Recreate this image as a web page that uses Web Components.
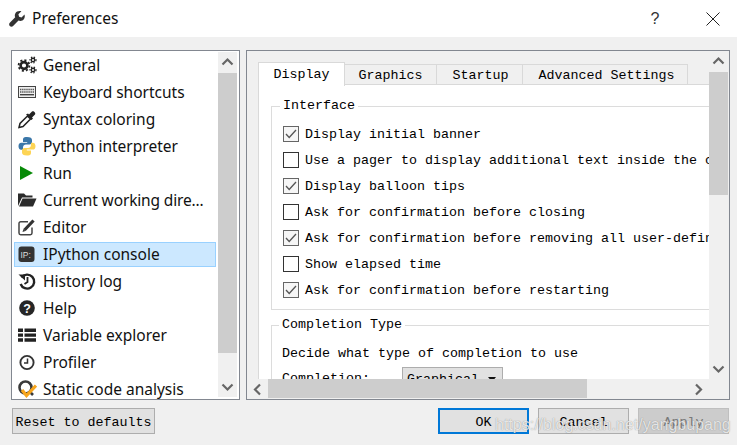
<!DOCTYPE html>
<html lang="en">
<head>
<meta charset="utf-8">
<title>Preferences</title>
<style>
    html, body { margin: 0; height: 100%; overflow: hidden; background: #f0f0f0; }
    svg { display: block; }
</style>
</head>
<body>
<pref-dialog>
    <title-bar slot="title">Preferences</title-bar>

    <nav-list slot="nav">
        <nav-item><svg slot="icon" width="20" height="20" viewBox="0 0 20 20" fill="none" stroke="#222"><circle cx="7" cy="10.5" r="3.4" stroke-width="2.6"/><circle cx="7" cy="10.5" r="5.4" stroke-width="1.8" stroke-dasharray="2.1 2.1"/><circle cx="16" cy="5" r="1.7" stroke-width="1.4"/><circle cx="16" cy="5" r="3" stroke-width="1.2" stroke-dasharray="1.4 1.5"/><circle cx="16" cy="15" r="1.7" stroke-width="1.4"/><circle cx="16" cy="15" r="3" stroke-width="1.2" stroke-dasharray="1.4 1.5"/></svg>General</nav-item>
        <nav-item><svg slot="icon" width="20" height="20" viewBox="0 0 20 20" fill="none"><rect x="1.5" y="4.5" width="17" height="11" fill="#eee" stroke="#444"/><path d="M3 7.5h14M3 10h14" stroke="#555" stroke-width="1.4" stroke-dasharray="1.4 .7"/><path d="M3 12.7h14" stroke="#444" stroke-width="1.4"/></svg>Keyboard shortcuts</nav-item>
        <nav-item><svg slot="icon" width="20" height="20" viewBox="0 0 20 20"><path d="M2 18.500l1-4 7.500-7.500 3 3L6 17.500z" fill="#fff" stroke="#222" stroke-width="1.500"/><path d="M9 5.500l5.500 5.500 1.500-1.500-1-1 3-3c1.200-1.500-1.500-4.200-3-3l-3 3-1-1z" fill="#222"/></svg>Syntax coloring</nav-item>
        <nav-item><svg slot="icon" width="20" height="20" viewBox="0 0 20 20"><path d="M10 1c-4 0-4 1.700-4 3v2h4.200v.8H4.200C2.400 6.800 1.500 8.300 1.500 10.200S2.400 13.700 4.200 13.700H6v-2.300c0-1.700 1.400-3 3-3h3.500c1.400 0 2.500-1.100 2.500-2.500V4c0-1.700-1.500-3-5-3z" fill="#3b77a9"/><path d="M10 19.400c4 0 4-1.700 4-3v-2H9.800v-.8h6c1.800 0 2.700-1.500 2.700-3.400S17.600 6.700 15.800 6.700H14V9c0 1.700-1.400 3-3 3H7.500C6.100 12 5 13.100 5 14.500v1.900c0 1.700 1.500 3 5 3z" fill="#fdd455"/></svg>Python interpreter</nav-item>
        <nav-item><svg slot="icon" width="20" height="20" viewBox="0 0 20 20"><path d="M3 3l13 7-13 7z" fill="#078a07"/></svg>Run</nav-item>
        <nav-item><svg slot="icon" width="20" height="20" viewBox="0 0 20 20"><path d="M1 3.500h6l2 2h6.500v2H5L2 14 1 16z" fill="#2b2b2b"/><path d="M5.500 8.500H19.500L16 16.500H2z" fill="#2b2b2b"/></svg><span style="letter-spacing:-.15px">Current working dire...</span></nav-item>
        <nav-item><svg slot="icon" width="20" height="20" viewBox="0 0 20 20" fill="none"><path d="M15 10.500v5.500a1.700 1.700 0 0 1-1.700 1.700H3.700A1.700 1.700 0 0 1 2 16V6.500a1.700 1.700 0 0 1 1.700-1.700H11" stroke="#444" stroke-width="1.500"/><path d="M7.500 13L16.500 3.500" stroke="#333" stroke-width="3.200"/><path d="M5.500 15l1-3 2 2z" fill="#333"/></svg>Editor</nav-item>
        <nav-item selected><svg slot="icon" width="20" height="20" viewBox="0 0 20 20"><rect x="1.500" y="2.500" width="16" height="15.500" rx="3" fill="#333"/><text x="3.500" y="13.500" font-family="Liberation Sans, sans-serif" font-size="8.500" fill="#ddd">IP:</text></svg>IPython console</nav-item>
        <nav-item><svg slot="icon" width="20" height="20" viewBox="0 0 20 20" fill="none" stroke="#222"><path d="M4.500 6.500A7 7 0 1 1 3.600 13" stroke-width="2.400"/><path d="M1.500 3.500h6.500v6z" fill="#222" stroke="none"/><path d="M10.500 6v5l-3 2" stroke-width="1.800"/></svg>History log</nav-item>
        <nav-item><svg slot="icon" width="20" height="20" viewBox="0 0 20 20"><circle cx="10" cy="10" r="7.800" fill="#262626"/><text x="10" y="14.500" text-anchor="middle" font-family="Liberation Sans, sans-serif" font-weight="700" font-size="12.500" fill="#fff">?</text></svg>Help</nav-item>
        <nav-item><svg slot="icon" width="20" height="20" viewBox="0 0 20 20" fill="#222"><path d="M1 3.500h5v3.400H1zM7.500 3.500H19v3.400H7.500zM1 8.400h5v3.400H1zM7.500 8.400H19v3.400H7.500zM1 13.300h5v3.400H1zM7.500 13.300H19v3.400H7.500z"/></svg>Variable explorer</nav-item>
        <nav-item><svg slot="icon" width="20" height="20" viewBox="0 0 20 20" fill="none" stroke="#333"><circle cx="10" cy="10.500" r="6.600" stroke-width="1.900"/><path d="M10.500 6.500v4.500H7" stroke-width="1.500"/></svg>Profiler</nav-item>
        <nav-item><svg slot="icon" width="20" height="20" viewBox="0 0 20 20" fill="none"><circle cx="8.500" cy="8.500" r="6" stroke="#3a3a3a" stroke-width="2.600"/><path d="M13 13l3 3" stroke="#3a3a3a" stroke-width="2.600"/><path d="M5 11l4.500 5.500 9.500-10" stroke="#f7a51c" stroke-width="3.200"/></svg>Static code analysis</nav-item>
    </nav-list>

    <settings-pane slot="pane">
        <tab-item slot="tabs" selected style="width:87px">Display</tab-item>
        <tab-item slot="tabs" style="width:92px">Graphics</tab-item>
        <tab-item slot="tabs" style="width:86px; padding-left:2px">Startup</tab-item>
        <tab-item slot="tabs" style="width:165px; padding-left:3px">Advanced Settings</tab-item>

        <group-box label="Interface" style="--inset:11px">
            <check-row checked>Display initial banner</check-row>
            <check-row>Use a pager to display additional text inside the console</check-row>
            <check-row checked>Display balloon tips</check-row>
            <check-row>Ask for confirmation before closing</check-row>
            <check-row checked>Ask for confirmation before removing all user-defined variables</check-row>
            <check-row>Show elapsed time</check-row>
            <check-row checked>Ask for confirmation before restarting</check-row>
        </group-box>
        <group-box label="Completion Type" style="--inset:10px; --gap:7px">
            <text-row>Decide what type of completion to use</text-row>
            <combo-row label="Completion:" value="Graphical"></combo-row>
        </group-box>
    </settings-pane>

    <push-button slot="reset" style="width:143px">Reset to defaults</push-button>
    <push-button slot="actions" focused>OK</push-button>
    <push-button slot="actions">Cancel</push-button>
    <push-button slot="actions" disabled>Apply</push-button>
</pref-dialog>

<script>
class PrefDialog extends HTMLElement {
    constructor() {
        super();
        this.shadowDOM = this.attachShadow({ mode: "open" });
    }
    connectedCallback() {
        this.shadowDOM.innerHTML = `
        <style>
        :host {
            display: flex;
            flex-direction: column;
            position: relative;
            height: 100vh;
            overflow: hidden;
            background: #f0f0f0;
            color: #000;
        }
        .body {
            display: flex;
            gap: 6px;
            padding: 13px 7px 0 11px;
        }
        .footer {
            display: flex;
            align-items: flex-start;
            justify-content: space-between;
            padding: 8px 8px 0 12px;
        }
        .actions { display: flex; gap: 9px; }
        .mark {
            position: absolute;
            left: 495px;
            top: 416px;
            font: 16px "Liberation Sans", sans-serif;
            color: rgba(255, 255, 255, 0.78);
            text-shadow: 0 0 1px rgba(90, 90, 90, 0.7);
            white-space: nowrap;
        }
        </style>
        <slot name="title"></slot>
        <div class="body"><slot name="nav"></slot><slot name="pane"></slot></div>
        <div class="footer">
            <slot name="reset"></slot>
            <div class="actions"><slot name="actions"></slot></div>
        </div>
        <div class="mark">https://blog.csdn.net/yangbupang</div>
        `;
    }
}

class TitleBar extends HTMLElement {
    constructor() {
        super();
        this.shadowDOM = this.attachShadow({ mode: "open" });
    }
    connectedCallback() {
        this.shadowDOM.innerHTML = `
        <style>
        :host {
            display: flex;
            align-items: center;
            height: 37px;
            background: #fff;
            font: 15.5px "Noto Sans", sans-serif;
            color: #111;
        }
        .icon { margin: 0 7px 0 9px; }
        .name { flex: 1; margin-top: -2px; }
        .help { width: 16px; margin-right: 43px; text-align: center; font: 16px "Liberation Sans", sans-serif; color: #333; }
        .close { margin-right: 17px; }
        </style>
        <svg class="icon" width="16" height="16" viewBox="0 0 16 16"><path d="M15.500 3.400l-3 3-2.400-.7-.7-2.400 3-3C10 -.4 7.400.4 6.300 2.400c-.7 1.300-.6 2.800-.1 3.900L.8 11.700c-.9.900-.9 2.400 0 3.300s2.400.9 3.300 0l5.400-5.400c1.200.5 2.700.5 3.900-.1 2-1.100 2.900-3.700 2.100-6.100z" fill="#333"/></svg>
        <span class="name"><slot></slot></span>
        <span class="help">?</span>
        <svg class="close" width="14" height="14" viewBox="0 0 14 14"><path d="M.5.500l13 13M13.500.500l-13 13" stroke="#222" stroke-width="1" fill="none"/></svg>
        `;
    }
}

class ScrollBar extends HTMLElement {
    constructor() {
        super();
        this.shadowDOM = this.attachShadow({ mode: "open" });
    }
    connectedCallback() {
        const horizontal = this.getAttribute("orient") === "h";
        const start = this.getAttribute("start") || 0;
        const size = this.getAttribute("size") || 0;
        const arrow = (d) => `<svg class="arrow" width="21" height="21" viewBox="0 0 21 21"><path d="${d}" fill="none" stroke="#666" stroke-width="2.200"/></svg>`;
        const first = horizontal ? arrow("M13 5.500L8 10.500l5 5") : arrow("M4.500 12.500l5-5 5 5");
        const last = horizontal ? arrow("M8 5.500l5 5-5 5") : arrow("M4.500 8.500l5 5 5-5");
        this.shadowDOM.innerHTML = `
        <style>
        :host {
            display: flex;
            flex-direction: ${horizontal ? "row" : "column"};
            background: #f0f0f0;
            ${horizontal ? "height: 19px;" : "width: 19px;"}
        }
        .arrow { display: block; flex: none; }
        .track { flex: 1; min-width: 0; min-height: 0; }
        .thumb {
            background: #cdcdcd;
            ${horizontal
                ? `height: 100%; width: ${size}px; margin-left: ${start}px;`
                : `width: 100%; height: ${size}px; margin-top: ${start}px;`}
        }
        </style>
        ${first}
        <div class="track"><div class="thumb"></div></div>
        ${last}
        `;
    }
}

class NavList extends HTMLElement {
    constructor() {
        super();
        this.shadowDOM = this.attachShadow({ mode: "open" });
    }
    connectedCallback() {
        this.shadowDOM.innerHTML = `
        <style>
        :host {
            display: flex;
            box-sizing: border-box;
            width: 229px;
            height: 350px;
            background: #fff;
            border: 1px solid #828790;
            font: 15.5px "Noto Sans", sans-serif;
            color: #111;
        }
        .items { flex: 1; min-width: 0; height: 347px; padding: 1px 2px 0; overflow: hidden; }
        scroll-bar { margin: 1px 2px 0 0; height: 345px; }
        </style>
        <div class="items"><slot></slot></div>
        <scroll-bar start="0" size="280"></scroll-bar>
        `;
    }
}

class NavItem extends HTMLElement {
    constructor() {
        super();
        this.shadowDOM = this.attachShadow({ mode: "open" });
    }
    connectedCallback() {
        this.shadowDOM.innerHTML = `
        <style>
        :host { display: block; padding: 1px 0; }
        .row {
            display: flex;
            align-items: center;
            gap: 6px;
            box-sizing: border-box;
            height: 25px;
            padding-left: 2px;
            white-space: nowrap;
            border: 1px solid transparent;
        }
        .row > span { margin-top: -2px; }
        ::slotted(svg) { margin-top: -1px; }
        :host([selected]) .row { background: #cce8ff; border-color: #99d1ff; }
        </style>
        <div class="row"><slot name="icon"></slot><span><slot></slot></span></div>
        `;
    }
}

class SettingsPane extends HTMLElement {
    constructor() {
        super();
        this.shadowDOM = this.attachShadow({ mode: "open" });
    }
    connectedCallback() {
        this.shadowDOM.innerHTML = `
        <style>
        :host {
            display: grid;
            grid-template-columns: 462px 20px;
            grid-template-rows: 328px 20px;
            box-sizing: border-box;
            width: 484px;
            height: 350px;
            border: 1px solid #828790;
            background: #f0f0f0;
            font: 13.33px "Liberation Mono", monospace;
            color: #000;
        }
        .view { overflow: hidden; padding: 11px 0 0 11px; }
        .tabs { display: flex; align-items: flex-end; height: 23px; position: relative; z-index: 1; margin-bottom: -1px; }
        .page {
            box-sizing: border-box;
            width: 760px;
            min-height: 320px;
            padding: 13px 12px 0;
            background: #fff;
            border-top: 1px solid #d9d9d9;
            border-left: 1px solid #d9d9d9;
        }
        </style>
        <div class="view">
            <div class="tabs"><slot name="tabs"></slot></div>
            <div class="page"><slot></slot></div>
        </div>
        <scroll-bar start="0" size="123"></scroll-bar>
        <scroll-bar orient="h" start="0" size="319"></scroll-bar>
        `;
    }
}

class TabItem extends HTMLElement {
    constructor() {
        super();
        this.shadowDOM = this.attachShadow({ mode: "open" });
    }
    connectedCallback() {
        this.shadowDOM.innerHTML = `
        <style>
        :host {
            display: flex;
            align-items: center;
            justify-content: center;
            box-sizing: border-box;
            height: 21px;
            padding-top: 2px;
            background: #f0f0f0;
            border-top: 1px solid #d9d9d9;
            border-right: 1px solid #d9d9d9;
            border-bottom: 1px solid #d9d9d9;
        }
        :host([selected]) {
            height: 24px;
            margin-bottom: -1px;
            padding-top: 0;
            padding-bottom: 1px;
            background: #fff;
            border-left: 1px solid #d9d9d9;
            border-bottom: 0;
        }
        </style>
        <slot></slot>
        `;
    }
}

class GroupBox extends HTMLElement {
    constructor() {
        super();
        this.shadowDOM = this.attachShadow({ mode: "open" });
    }
    connectedCallback() {
        this.shadowDOM.innerHTML = `
        <style>
        :host { display: block; margin-top: var(--gap, 0); }
        fieldset {
            margin: 0;
            padding: 7px 0 6px var(--inset, 11px);
            border: 1px solid #dcdcdc;
            min-width: 0;
        }
        legend {
            margin-left: -3px;
            padding: 0 3px;
            line-height: 16px;
        }
        </style>
        <fieldset>
            <legend>${this.getAttribute("label")}</legend>
            <slot></slot>
        </fieldset>
        `;
    }
}

class CheckRow extends HTMLElement {
    constructor() {
        super();
        this.shadowDOM = this.attachShadow({ mode: "open" });
    }
    connectedCallback() {
        const mark = this.hasAttribute("checked")
            ? `<path d="M3 8l3.200 3.500L13 4" fill="none" stroke="#555" stroke-width="1.300"/>`
            : "";
        this.shadowDOM.innerHTML = `
        <style>
        :host { display: flex; align-items: center; gap: 6px; height: 26px; white-space: nowrap; }
        .box { flex: none; box-sizing: border-box; width: 16px; height: 16px; border: 1px solid #333; background: #fff; }
        :host([checked]) .box { border-color: #666; background: #f6f6f6; }
        svg { display: block; margin: -1px; }
        </style>
        <div class="box"><svg width="16" height="16" viewBox="0 0 16 16">${mark}</svg></div>
        <span><slot></slot></span>
        `;
    }
}

class TextRow extends HTMLElement {
    constructor() {
        super();
        this.attachShadow({ mode: "open" }).innerHTML = `
        <style>:host { display: flex; align-items: center; height: 26px; white-space: nowrap; }</style>
        <slot></slot>
        `;
    }
}

class ComboRow extends HTMLElement {
    constructor() {
        super();
        this.shadowDOM = this.attachShadow({ mode: "open" });
    }
    connectedCallback() {
        this.shadowDOM.innerHTML = `
        <style>
        :host { display: flex; align-items: flex-start; height: 26px; margin-top: 1px; white-space: nowrap; }
        .label { width: 120px; line-height: 24px; }
        .combo {
            display: flex;
            align-items: center;
            justify-content: space-between;
            box-sizing: border-box;
            width: 101px;
            height: 24px;
            padding: 0 6px 0 4px;
            background: #e1e1e1;
            border: 1px solid #adadad;
        }
        .tri { width: 0; height: 0; border: 4px solid transparent; border-top: 5px solid #111; border-bottom: 0; }
        </style>
        <span class="label">${this.getAttribute("label")}</span>
        <div class="combo"><span>${this.getAttribute("value")}</span><span class="tri"></span></div>
        `;
    }
}

class PushButton extends HTMLElement {
    constructor() {
        super();
        this.shadowDOM = this.attachShadow({ mode: "open" });
    }
    connectedCallback() {
        this.shadowDOM.innerHTML = `
        <style>
        :host {
            display: flex;
            align-items: center;
            justify-content: center;
            box-sizing: border-box;
            width: 91px;
            height: 26px;
            padding-top: 2px;
            background: #e1e1e1;
            border: 1px solid #adadad;
            font: 13.33px "Liberation Mono", monospace;
            color: #000;
        }
        :host([focused]) { border: 2px solid #0078d7; }
        :host([disabled]) { background: #cccccc; border-color: #bfbfbf; color: #787878; }
        </style>
        <slot></slot>
        `;
    }
}

customElements.define("pref-dialog", PrefDialog);
customElements.define("title-bar", TitleBar);
customElements.define("scroll-bar", ScrollBar);
customElements.define("nav-list", NavList);
customElements.define("nav-item", NavItem);
customElements.define("settings-pane", SettingsPane);
customElements.define("tab-item", TabItem);
customElements.define("group-box", GroupBox);
customElements.define("check-row", CheckRow);
customElements.define("text-row", TextRow);
customElements.define("combo-row", ComboRow);
customElements.define("push-button", PushButton);
</script>
</body>
</html>
